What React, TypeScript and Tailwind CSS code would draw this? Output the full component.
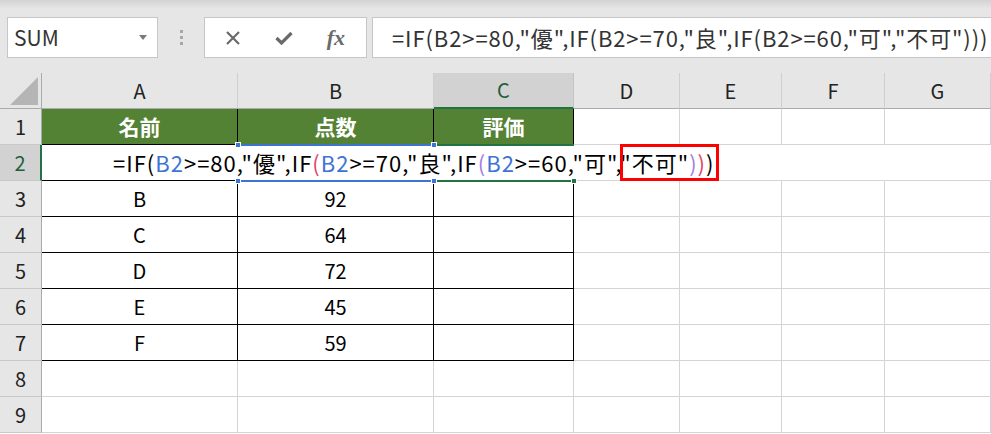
import React from "react";

const font = { fontFamily: '"Noto Sans CJK JP", "Noto Sans", sans-serif' };

const cols = ["A", "B", "C", "D", "E", "F", "G"];

const rows = [
  { name: "B", score: "92" },
  { name: "C", score: "64" },
  { name: "D", score: "72" },
  { name: "E", score: "45" },
  { name: "F", score: "59" },
];

function Formula() {
  // cell edit view with coloured references / parentheses
  const blue = "text-[#3d74d4]";
  const red = "text-[#e0456b]";
  const purple = "text-[#a87de0]";
  return (
    <span className="text-black">
      =IF(<span className={blue}>B2</span>&gt;=80,"優",IF
      <span className={red}>(</span>
      <span className={blue}>B2</span>&gt;=70,"良",IF
      <span className={purple}>(</span>
      <span className={blue}>B2</span>&gt;=60,"可","不可"
      <span className={purple}>)</span>
      <span className={red}>)</span>)
    </span>
  );
}

export default function App() {
  return (
    <div className="w-[991px] h-[434px] overflow-hidden bg-white" style={font}>
      {/* toolbar */}
      <div className="h-[73px] bg-gradient-to-b from-[#d3d3d3] via-[#e6e6e6] via-[12%] to-[#e6e6e6] flex items-start pt-[17px] pl-[7px]">
        <div className="w-[151px] h-[41px] bg-white border border-[#c6c6c6] flex items-center justify-between pl-[6px] pr-[10px]">
          <span className="text-[21px] text-[#333] leading-none">SUM</span>
          <svg width="8" height="5" viewBox="0 0 8 5">
            <path d="M0 0h8L4 5z" fill="#7a7a7a" />
          </svg>
        </div>
        <div className="w-[46px] h-[41px] flex flex-col items-center justify-center gap-[3px]">
          <span className="w-[3px] h-[3px] bg-[#a8a8a8]" />
          <span className="w-[3px] h-[3px] bg-[#a8a8a8]" />
          <span className="w-[3px] h-[3px] bg-[#a8a8a8]" />
        </div>
        <div className="w-[163px] h-[41px] bg-white border border-[#c6c6c6] flex items-center">
          <div className="w-[58px] flex justify-center">
            <svg width="16" height="16" viewBox="0 0 16 16">
              <path d="M2 2l12 12M14 2L2 14" stroke="#6a6a6a" strokeWidth="2.2" />
            </svg>
          </div>
          <div className="w-[46px] flex justify-center">
            <svg width="18" height="14" viewBox="0 0 18 14">
              <path d="M1.5 7l5 5L16.5 2" stroke="#6a6a6a" strokeWidth="3.2" fill="none" />
            </svg>
          </div>
          <div className="w-[62px] flex justify-center">
            <span
              className="italic font-bold text-[22px] text-[#6a6a6a] leading-none"
              style={{ fontFamily: '"Liberation Serif", serif' }}
            >
              fx
            </span>
          </div>
        </div>
        <div className="ml-[5px] flex-1 h-[41px] bg-white border border-[#c6c6c6] border-r-0 flex items-center pl-[19px] whitespace-nowrap text-[22px] tracking-[0.9px] text-[#333]">
          =IF(B2&gt;=80,"優",IF(B2&gt;=70,"良",IF(B2&gt;=60,"可","不可")))
        </div>
      </div>

      {/* sheet */}
      <div className="grid grid-cols-[42px_196px_196px_140px_106px_102px_103px_106px] auto-rows-[36px] text-[20px]">
        {/* header row */}
        <div className="bg-[#e6e6e6] border-r border-b border-[#ababab] flex items-end justify-end pr-[3px] pb-[3px]">
          <svg width="28" height="28" viewBox="0 0 28 28">
            <path d="M28 0V28H0z" fill="#b5b5b5" />
          </svg>
        </div>
        {cols.map((c) =>
          c === "C" ? (
            <div
              key={c}
              className="bg-[#d2d2d2] border-r border-[#c3c3c3] border-b-2 border-b-[#217346] flex items-center justify-center text-[#1e5e3a]"
            >
              {c}
            </div>
          ) : (
            <div
              key={c}
              className="bg-[#e6e6e6] border-r border-[#cfcfcf] border-b border-b-[#ababab] flex items-center justify-center text-[#222]"
            >
              {c}
            </div>
          )
        )}

        {/* row 1 */}
        <div className="bg-[#e6e6e6] border-r border-r-[#ababab] border-b border-b-[#c8c8c8] flex items-center justify-center text-[#222]">
          1
        </div>
        {["名前", "点数", "評価"].map((h) => (
          <div
            key={h}
            className="bg-[#548235] border-r border-b border-black flex items-center justify-center text-white text-[21px] font-bold"
          >
            {h}
          </div>
        ))}
        {[0, 1, 2, 3].map((i) => (
          <div key={i} className="border-r border-b border-[#d4d4d4]" />
        ))}

        {/* row 2 (editing) */}
        <div className="bg-[#d2d2d2] border-r-2 border-r-[#217346] border-b border-b-[#c8c8c8] flex items-center justify-center text-[#1e5e3a]">
          2
        </div>
        <div className="col-span-7 relative bg-white border-b border-[#d4d4d4]">
          <div className="absolute left-0 bottom-[-1px] w-[196px] h-px bg-black" />
          {/* B2 reference box */}
          <div className="absolute left-[196px] top-[-1px] w-[196px] h-[2px] bg-[#3d74d4]" />
          <div className="absolute left-[196px] top-[35px] w-[196px] h-[2px] bg-[#3d74d4]" />
          <div className="absolute left-[193px] top-[-3px] w-[6px] h-[6px] bg-[#3d74d4] border border-white" />
          <div className="absolute left-[389px] top-[-3px] w-[6px] h-[6px] bg-[#3d74d4] border border-white" />
          <div className="absolute left-[193px] top-[33px] w-[6px] h-[6px] bg-[#3d74d4] border border-white" />
          <div className="absolute left-[389px] top-[33px] w-[6px] h-[6px] bg-[#3d74d4] border border-white" />
          {/* active cell C2 */}
          <div className="absolute left-[395px] top-[-1px] w-[137px] h-[2px] bg-[#217346]" />
          <div className="absolute left-[395px] top-[35px] w-[135px] h-[2px] bg-[#217346]" />
          <div className="absolute left-[529px] top-[33px] w-[6px] h-[6px] bg-[#217346] border border-white" />
          <div className="h-full flex items-center pl-[71px] whitespace-nowrap text-[22px] tracking-[1px]">
            <Formula />
          </div>
          <div className="absolute left-[578px] top-[-1px] w-[99px] h-[37px] border-[3px] border-[#ff0000]" />
        </div>

        {/* rows 3-7 */}
        {rows.map((r, i) => (
          <React.Fragment key={r.name}>
            <div className="bg-[#e6e6e6] border-r border-r-[#ababab] border-b border-b-[#c8c8c8] flex items-center justify-center text-[#222]">
              {i + 3}
            </div>
            <div className="border-r border-b border-black flex items-center justify-center text-black">
              {r.name}
            </div>
            <div className="border-r border-b border-black flex items-center justify-center text-black">
              {r.score}
            </div>
            <div className="border-r border-b border-black" />
            {[0, 1, 2, 3].map((k) => (
              <div key={k} className="border-r border-b border-[#d4d4d4]" />
            ))}
          </React.Fragment>
        ))}

        {/* rows 8-9 */}
        {[8, 9].map((n) => (
          <React.Fragment key={n}>
            <div className="bg-[#e6e6e6] border-r border-r-[#ababab] border-b border-b-[#c8c8c8] flex items-center justify-center text-[#222]">
              {n}
            </div>
            {cols.map((c) => (
              <div key={c} className="border-r border-b border-[#d4d4d4]" />
            ))}
          </React.Fragment>
        ))}
      </div>
    </div>
  );
}
